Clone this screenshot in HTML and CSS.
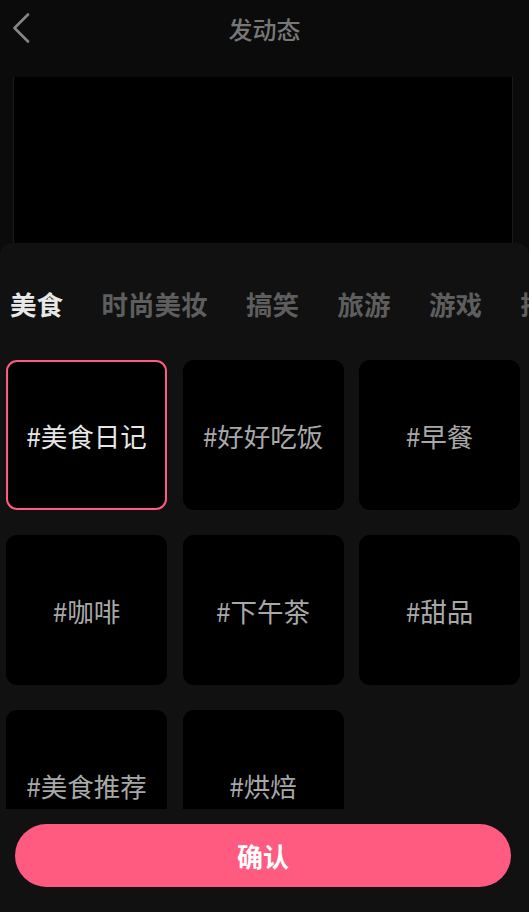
FILE: index.html
```html
<!DOCTYPE html>
<html lang="zh-CN">
<head>
<meta charset="UTF-8">
<meta name="viewport" content="width=device-width, initial-scale=1.0">
<title>发动态</title>
<link rel="stylesheet" href="styles.css">
</head>
<body>

<div class="page">
    <header class="nav-bar">
        <span class="back-btn">
            <svg width="18" height="30" viewBox="0 0 18 30">
                <polyline points="16,1.5 2.5,15 16,28.5" fill="none" stroke="#858585" stroke-width="2.6" stroke-linecap="round" stroke-linejoin="round"/>
            </svg>
        </span>
        <h1 class="nav-title">发动态</h1>
    </header>

    <!-- Preview -->
    <div class="preview"></div>

    <!-- Topic Sheet -->
    <div class="topic-sheet">
        <div class="topic-tabs">
            <span class="tab active">美食</span>
            <span class="tab">时尚美妆</span>
            <span class="tab">搞笑</span>
            <span class="tab">旅游</span>
            <span class="tab">游戏</span>
            <span class="tab">搞怪</span>
        </div>

        <div class="topic-scroll">
            <div class="topic-grid">
                <div class="topic-card selected">#美食日记</div>
                <div class="topic-card">#好好吃饭</div>
                <div class="topic-card">#早餐</div>
                <div class="topic-card">#咖啡</div>
                <div class="topic-card">#下午茶</div>
                <div class="topic-card">#甜品</div>
                <div class="topic-card">#美食推荐</div>
                <div class="topic-card">#烘焙</div>
            </div>
        </div>

        <button class="confirm-btn">确认</button>
    </div>
</div>

</body>
</html>
```

FILE: styles.css
```css
/* Basic Styles */
body {
    font-family: "Noto Sans CJK SC", "Noto Sans", sans-serif;
    margin: 0;
    padding: 0;
    background-color: #0b0b0b;
}
.page {
    height: 912px;
    display: flex;
    flex-direction: column;
    overflow: hidden;
}
/* Header Styles */
.nav-bar {
    position: relative;
    height: 56px;
    display: flex;
    align-items: center;
    justify-content: center;
}
.back-btn {
    position: absolute;
    left: 12px;
    top: 13px;
    display: flex;
}
.nav-title {
    margin: 0;
    font-size: 24px;
    font-weight: 500;
    color: #777;
}
/* Preview Styles */
.preview {
    height: 166px;
    margin: 21px 16px 0 13px;
    background-color: #000;
    border-left: 1px solid #1a1a1a;
    border-right: 1px solid #1a1a1a;
}
/* Sheet Styles */
.topic-sheet {
    flex: 1;
    display: flex;
    flex-direction: column;
    min-height: 0;
    background-color: #111;
    border-radius: 12px 12px 0 0;
}
.topic-tabs {
    display: flex;
    gap: 38.5px;
    padding: 42px 0 0 10px;
    white-space: nowrap;
    overflow: hidden;
}
.tab {
    font-size: 26.5px;
    line-height: 38px;
    font-weight: 700;
    color: #5e5e5e;
    flex-shrink: 0;
}
.tab.active {
    color: #e8e8e8;
}
.topic-scroll {
    flex: 1;
    min-height: 0;
    margin-top: 37px;
    overflow: hidden;
}
.topic-grid {
    display: grid;
    grid-template-columns: repeat(3, 161px);
    grid-auto-rows: 150px;
    column-gap: 15.5px;
    row-gap: 25px;
    padding-left: 6px;
}
.topic-card {
    display: flex;
    align-items: center;
    justify-content: center;
    box-sizing: border-box;
    background-color: #000;
    border-radius: 11px;
    font-size: 26.5px;
    color: #a8a8a8;
}
.topic-card.selected {
    border: 2.5px solid #ff5a80;
    color: #e6e6e6;
}
.confirm-btn {
    height: 63px;
    margin: 15px 18px 25px 15px;
    border: none;
    border-radius: 32px;
    background-color: #ff5a80;
    color: #fff;
    font-family: inherit;
    font-size: 26px;
    font-weight: 700;
    cursor: pointer;
}
```
